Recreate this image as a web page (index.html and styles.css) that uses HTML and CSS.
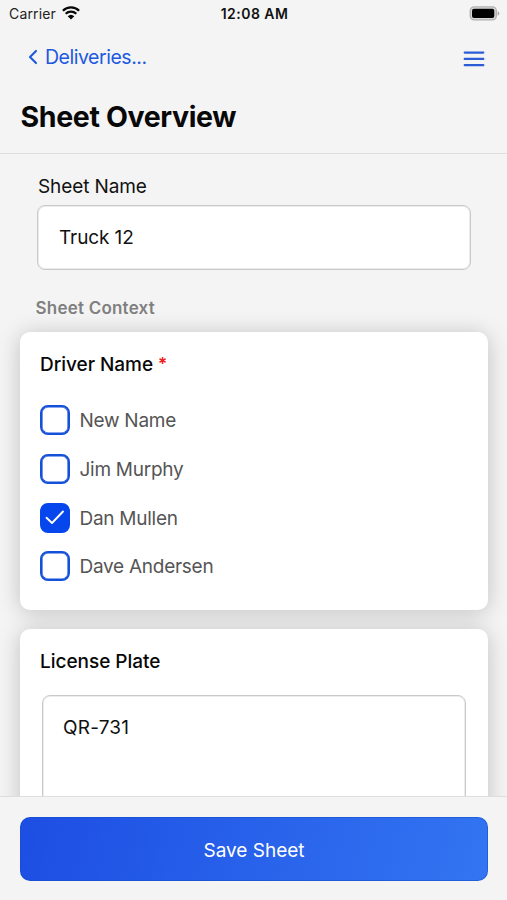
FILE: index.html
```html
<!DOCTYPE html>
<html lang="en">
<head>
<meta charset="utf-8">
<title>Sheet Overview</title>
<link rel="stylesheet" href="styles.css">
</head>
<body>
<div class="app">
  <header class="header">
    <div class="status">
      <div class="carrier"><span>Carrier</span>
        <svg class="wifi" width="18" height="14" viewBox="0 0 18 14"><path d="M.9 4.7a11.6 11.6 0 0 1 16.2 0M3.7 7.7a7.6 7.6 0 0 1 10.6 0" fill="none" stroke="#080808" stroke-width="2.3"/><path d="M5.7 10.2a4.8 4.8 0 0 1 6.6 0L9 13.6z" fill="#080808"/></svg>
      </div>
      <span class="time">12:08 AM</span>
      <svg class="battery" width="31" height="15" viewBox="0 0 31 15"><rect x="1.3" y=".9" width="26" height="13" rx="4" fill="#d8d8d8" stroke="#b0b0b0" stroke-width="1.4"/><rect x="3" y="2.8" width="22.3" height="9.2" rx="2" fill="#000"/><path d="M28.6 5q3.6 2.4 0 4.8z" fill="#aaa"/></svg>
    </div>
    <nav class="nav">
      <a class="back"><svg width="10" height="16" viewBox="0 0 10 16"><path d="M8 1.9 2 8l6 6.1" fill="none" stroke="#2059df" stroke-width="2.1" stroke-linecap="round" stroke-linejoin="round"/></svg><span>Deliveries...</span></a>
      <svg class="menu" width="22" height="18" viewBox="0 0 22 18"><path d="M1.7 2.6h18.6M1.7 8.9h18.6M1.7 15.2h18.6" stroke="#2b5bd7" stroke-width="2.2" stroke-linecap="round"/></svg>
    </nav>
    <h1 class="title">Sheet Overview</h1>
  </header>
  <main class="content">
    <div class="field">
      <label class="label">Sheet Name</label>
      <div class="input">Truck 12</div>
    </div>
    <h2 class="section">Sheet Context</h2>
    <section class="card driver">
      <h3 class="card-title"><span>Driver Name</span><span class="required">*</span></h3>
      <ul class="options">
        <li class="option"><span class="box"></span><span>New Name</span></li>
        <li class="option"><span class="box"></span><span>Jim Murphy</span></li>
        <li class="option"><span class="box checked"><svg width="20" height="16" viewBox="0 0 20 16"><path d="M1.5 7.8 7 13 18 1.5" fill="none" stroke="#fff" stroke-width="1.9" stroke-linecap="round" stroke-linejoin="round"/></svg></span><span>Dan Mullen</span></li>
        <li class="option"><span class="box"></span><span>Dave Andersen</span></li>
      </ul>
    </section>
    <section class="card plate">
      <h3 class="card-title"><span>License Plate</span></h3>
      <div class="textarea">QR-731</div>
    </section>
  </main>
  <footer class="footer"><button class="save">Save Sheet</button></footer>
</div>
</body>
</html>
```
FILE: styles.css
```css
* { box-sizing: border-box; }
body { margin: 0; background: #f4f4f4; font-family: Inter, "Liberation Sans", sans-serif; color: #111; }
h1, h2, h3, ul { margin: 0; padding: 0; }
svg { display: block; flex: none; }
.app { height: 900px; display: flex; flex-direction: column; overflow: hidden; }
.header { height: 154px; flex: none; border-bottom: 1px solid #dedede; display: flex; flex-direction: column; }
.status { height: 28px; display: grid; grid-template-columns: 1fr auto 1fr; align-items: center; padding: 0 7px 0 9px; font-size: 14px; line-height: 20px; }
.carrier { display: flex; align-items: center; gap: 6px; color: #222; letter-spacing: .15px; }
.wifi { margin-top: -2px; }
.time { font-weight: 600; font-size: 14px; letter-spacing: .45px; }
.battery { justify-self: end; margin-top: -1px; }
.nav { height: 58px; display: flex; justify-content: space-between; align-items: center; padding: 0 22px 0 28px; }
.back { display: flex; align-items: center; gap: 7px; color: #2059df; font-size: 19.5px; line-height: 24px; letter-spacing: -.47px; }
.back span { margin-top: -1px; }
.menu { margin-top: 4px; }
.title { padding: 13px 0 0 20.5px; font-size: 28.5px; line-height: 36px; font-weight: 700; color: #080808; letter-spacing: -.36px; }
.content { flex: 1; min-height: 0; overflow: hidden; padding: 20px 19px 0 20px; }
.field { padding: 0 17px; }
.label { display: block; padding: 1px 0 0 1px; font-size: 19px; line-height: 24px; margin-bottom: 6px; letter-spacing: -.1px; }
.input { height: 65px; border: 1px solid #c9c9c9; border-radius: 8px; background: #fff; box-shadow: inset 0 0 0 1px #ececec; display: flex; align-items: center; padding: 0 0 0 21px; font-size: 19px; letter-spacing: -.1px; }
.section { margin: 28px 0 13px 15.5px; font-size: 17px; line-height: 21px; font-weight: 600; color: #808080; letter-spacing: .22px; }
.card { background: #fff; border-radius: 10px; box-shadow: 0 2px 22px rgba(0, 8, 8, .21); padding: 21px 20px 0; }
.card-title { font-size: 19px; line-height: 24px; font-weight: 500; color: #080808; display: flex; gap: 5px; letter-spacing: -.03px; }
.required { color: #f01818; font-size: 17px; font-weight: 600; line-height: 22px; }
.driver { height: 278px; margin-bottom: 19px; }
.options { list-style: none; margin-top: 28px; display: flex; flex-direction: column; gap: 18.8px; }
.option { height: 30px; display: flex; align-items: center; gap: 9.5px; font-size: 19px; line-height: 24px; color: #555; letter-spacing: -.27px; }
.option > span:last-child { padding-top: 2px; }
.box { width: 30px; height: 30px; border: 2px solid #1550d8; box-shadow: inset 0 0 0 .6px #1550d8; border-radius: 8px; flex: none; display: flex; align-items: center; justify-content: center; }
.checked { background: #0546ed; border-color: #0546ed; box-shadow: none; }
.plate { height: 300px; }
.textarea { margin: 21px 2px 0; height: 200px; border: 1px solid #c9c9c9; box-shadow: inset 0 0 0 1px #ececec; border-radius: 8px; padding: 20px 20px 0 20px; font-size: 19px; line-height: 24px; letter-spacing: .2px; }
.footer { height: 104px; flex: none; border-top: 1px solid #dedede; background: #f4f4f4; padding: 20px 19px 20px 20px; position: relative; }
.save { display: block; width: 100%; height: 64px; padding: 2px 0 0; border: 1px solid rgba(20, 80, 200, .55); border-radius: 10px; background: linear-gradient(105deg, #1d4ee3, #3375f2); background-origin: border-box; color: #fff; font-family: inherit; font-size: 19px; }
```
